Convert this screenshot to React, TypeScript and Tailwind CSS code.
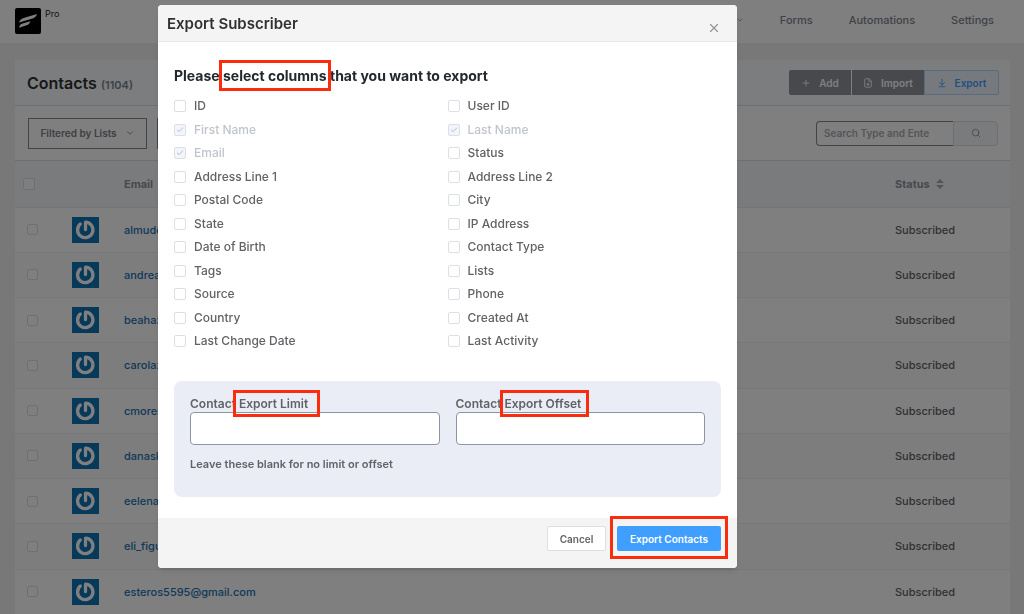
import { useState } from "react";
import { ArrowDownToLine, Check, ChevronDown, FilePlus, Plus, Search, X } from "lucide-react";

const contacts = [
  "almudena",
  "andreag",
  "beahaz",
  "carolaz",
  "cmoreno",
  "danaska",
  "eelena",
  "eli_figu",
  "esteros5595@gmail.com",
];

const columns = [
  "ID",
  "User ID",
  "First Name",
  "Last Name",
  "Email",
  "Status",
  "Address Line 1",
  "Address Line 2",
  "Postal Code",
  "City",
  "State",
  "IP Address",
  "Date of Birth",
  "Contact Type",
  "Tags",
  "Lists",
  "Source",
  "Phone",
  "Country",
  "Created At",
  "Last Change Date",
  "Last Activity",
];

// these are always part of the export
const locked = ["First Name", "Last Name", "Email"];

const Logo = () => (
  <svg viewBox="0 0 26 26" className="h-[26px] w-[26px]">
    <rect width="26" height="26" rx="2" fill="#000" />
    <path d="M4 14.600c.6-2.300 2.200-3.800 4.600-4.500L22 6c-.6 2.400-2 3.700-4.400 4.400z" fill="#fff" />
    <path d="M4 19.800c.4-2.300 1.600-3.600 3.700-4.200l7.600-2.300c-.5 2.200-1.700 3.400-3.700 4z" fill="#fff" />
  </svg>
);

const Avatar = () => (
  <svg viewBox="0 0 27 26" className="h-[26px] w-[27px]">
    <rect width="27" height="26" fill="#0d72b4" />
    <path
      d="M8.300 7A7.700 7.700 0 1 0 13.500 5.200v7.300"
      fill="none"
      stroke="#fff"
      strokeWidth="3.300"
      strokeLinecap="round"
      strokeLinejoin="round"
    />
  </svg>
);

const Navbar = () => (
  <header className="flex h-[43px] items-start justify-between bg-white pt-2 pr-[30px] pl-[15px]">
    <div className="flex gap-1">
      <Logo />
      <span className="text-[9px] leading-3 text-gray-800">Pro</span>
    </div>
    <nav className="flex items-center gap-9 pt-1 text-[11px] leading-4 font-medium text-[#7d8590]">
      <ChevronDown className="h-2 w-2" />
      <a href="#forms">Forms</a>
      <a href="#automations">Automations</a>
      <a href="#settings">Settings</a>
    </nav>
  </header>
);

const Contacts = () => (
  <main className="mt-[17px] mr-[14px] ml-[15px] bg-white">
    <div className="flex h-[46px] items-center justify-between border-b border-[#dcdfe6] bg-[#f7fafc] pr-[11px] pl-3">
      <h1 className="text-base font-semibold text-[#303133]">
        Contacts <small className="text-[11px] font-semibold text-[#7d8590]">(1104)</small>
      </h1>
      <div className="flex h-[25px] text-[10px] leading-4 font-semibold">
        <button className="flex w-[62px] items-center justify-center gap-2 rounded-l-xs bg-[#909399] text-white">
          <Plus className="h-[10px] w-[10px]" strokeWidth={2} />
          Add
        </button>
        <button className="flex w-[73px] items-center justify-center gap-2 border-l border-white bg-[#909399] text-white">
          <FilePlus className="h-[10px] w-[10px]" strokeWidth={2} />
          Import
        </button>
        <button className="flex w-[75px] items-center justify-center gap-2 rounded-r-xs border border-[#b3d8ff] bg-[#ecf5ff] text-[#409eff]">
          <ArrowDownToLine className="h-[10px] w-[10px]" strokeWidth={2} />
          Export
        </button>
      </div>
    </div>

    <div className="flex h-[55px] items-center justify-between border-b border-[#dcdfe6] pr-3 pl-[13px]">
      <div className="flex gap-[10px] text-[10px] leading-4 font-semibold text-[#7d8086]">
        <button className="flex h-[31px] w-[119px] items-center justify-center gap-2 border border-[#7d8b99]">
          Filtered by Lists
          <ChevronDown className="h-[10px] w-[10px]" />
        </button>
        <button aria-label="More filters" className="flex h-[31px] w-[119px] items-center justify-center border border-[#7d8b99]">
          <ChevronDown className="h-[10px] w-[10px]" />
        </button>
      </div>
      <div className="flex h-[25px]">
        <input
          type="text"
          aria-label="Search contacts"
          placeholder="Search Type and Enter..."
          className="w-[137px] rounded-l-sm border border-r-0 border-[#7d8b99] pr-6 pl-[7px] text-[10px] font-semibold placeholder:text-[#a8abb2]"
        />
        <button aria-label="Search" className="flex w-[45px] items-center justify-center rounded-r-sm border border-[#dcdfe6] bg-[#f5f7fa] text-[#909399]">
          <Search className="h-[10px] w-[10px]" />
        </button>
      </div>
    </div>

    <table className="h-[454px] w-full table-fixed text-left text-[11px] leading-4">
      <thead>
        <tr className="h-[46px] border-b border-[#e8ebf2] bg-[#f5f7fa] text-[#909399]">
          <th className="w-[57px] pl-2">
            <input type="checkbox" aria-label="Select all" className="block h-3 w-3 appearance-none rounded-xs border border-[#dcdfe6] bg-white" />
          </th>
          <th className="w-[52px]"></th>
          <th className="font-bold">Email</th>
          <th className="w-[115px] font-bold">
            <span className="flex items-center gap-[6px]">
              Status
              <svg viewBox="0 0 8 10" className="h-[10px] w-2 fill-[#a8abb2]">
                <path d="M4 0l4 4H0zM4 10l4-4H0z" />
              </svg>
            </span>
          </th>
        </tr>
      </thead>
      <tbody>
        {contacts.map((email) => (
          <tr key={email} className="h-[45px] border-b border-[#ebeef5] even:bg-[#fafafa]">
            <td className="pl-3">
              <input type="checkbox" aria-label={email} className="block h-[11px] w-[11px] appearance-none rounded-xs border border-[#dcdfe6] bg-white" />
            </td>
            <td>
              <Avatar />
            </td>
            <td>
              <a href="#contact" className="font-medium text-[#2271b1]">{email}</a>
            </td>
            <td className="font-medium text-[#606266]">Subscribed</td>
          </tr>
        ))}
      </tbody>
    </table>
  </main>
);

const ExportModal = () => {
  const [selected, setSelected] = useState<string[]>(locked);

  const toggle = (name: string) =>
    setSelected(selected.includes(name) ? selected.filter((s) => s !== name) : [...selected, name]);

  return (
    <div className="fixed inset-0 flex items-start justify-center bg-black/50 pt-[5px] pr-[129px]">
      <div role="dialog" aria-label="Export Subscriber" className="w-full max-w-[579px] overflow-hidden rounded-sm bg-white shadow-md">
        <div className="flex h-[37px] items-center justify-between border-b border-[#e8e8e8] bg-[#f4f4f4] pr-4 pl-[9px]">
          <h2 className="pt-[2px] text-[15px] leading-5 font-semibold text-[#303133]">Export Subscriber</h2>
          <button aria-label="Close" className="pt-[10px] text-[#909399]">
            <X className="h-[14px] w-[14px]" strokeWidth={2} />
          </button>
        </div>

        <div className="px-4 pt-6 pb-[21px]">
          <h3 className="text-sm leading-5 font-bold text-[#23282d]">
            Please{" "}
            <span className="relative">
              select columns
              <span className="absolute -inset-x-1 -inset-y-[7px] border-3 border-[#fa2c0e]"></span>
            </span>{" "}
            that you want to export
          </h3>

          <div className="mt-3 grid h-[251px] grid-cols-2 content-between">
            {columns.map((name) => (
              <label
                key={name}
                className={`flex h-4 items-center gap-2 text-xs font-medium ${locked.includes(name) ? "text-[#c0c4cc]" : "text-[#606266]"}`}
              >
                <span className="relative">
                  <input
                    type="checkbox"
                    checked={selected.includes(name)}
                    disabled={locked.includes(name)}
                    onChange={() => toggle(name)}
                    className="block h-3 w-3 appearance-none rounded-xs border border-[#dcdfe6] bg-white disabled:bg-[#f2f6fc]"
                  />
                  {selected.includes(name) && (
                    <Check className="pointer-events-none absolute top-[2px] left-[2px] h-2 w-2 text-[#b4bccc]" strokeWidth={3} />
                  )}
                </span>
                {name}
              </label>
            ))}
          </div>

          <div className="mt-8 rounded-lg bg-[#eaedf6] px-4 pt-[15px] pb-[25px] text-xs leading-4 font-semibold text-[#606266]">
            <div className="grid grid-cols-2 gap-4">
              <div>
                <label htmlFor="limit" className="block">
                  Contact{" "}
                  <span className="relative">
                    Export Limit
                    <span className="absolute -inset-y-[6px] -right-3 -left-[6px] border-3 border-[#fa2c0e]"></span>
                  </span>
                </label>
                <input id="limit" type="text" className="block h-[33px] w-full rounded-sm border border-[#8c96a3] bg-white px-2" />
              </div>
              <div>
                <label htmlFor="offset" className="block">
                  Contact{" "}
                  <span className="relative">
                    Export Offset
                    <span className="absolute -inset-y-[6px] -right-2 -left-1 border-3 border-[#fa2c0e]"></span>
                  </span>
                </label>
                <input id="offset" type="text" className="block h-[33px] w-full rounded-sm border border-[#8c96a3] bg-white px-2" />
              </div>
            </div>
            <p className="mt-[11px] text-[11px]">Leave these blank for no limit or offset</p>
          </div>
        </div>

        <div className="flex h-[50px] items-center justify-end gap-[11px] bg-[#f4f4f4] px-4 pb-[9px] text-[10px] leading-4 font-semibold">
          <button className="h-[25px] w-[59px] rounded-xs border border-[#dcdfe6] bg-white text-[#606266]">Cancel</button>
          <div className="relative">
            <button className="block h-[25px] w-[104px] rounded-xs bg-[#409eff] text-white">Export Contacts</button>
            <span className="pointer-events-none absolute -inset-x-[7px] -top-[10px] -bottom-2 border-3 border-[#fa2c0e]"></span>
          </div>
        </div>
      </div>
    </div>
  );
};

export default function App() {
  return (
    <div className="h-screen overflow-hidden bg-[#f0f0f1] font-[Inter,sans-serif]">
      <Navbar />
      <Contacts />
      <ExportModal />
    </div>
  );
}
